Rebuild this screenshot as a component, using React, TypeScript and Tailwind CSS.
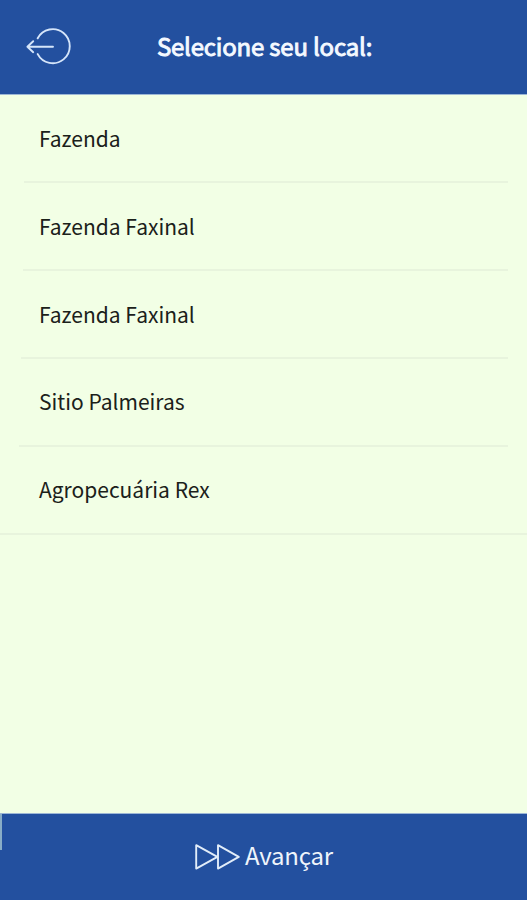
const places = [
  { name: "Fazenda", line: "ml-[24px] mr-[19px]" },
  { name: "Fazenda Faxinal", line: "ml-[23px] mr-[19px]" },
  { name: "Fazenda Faxinal", line: "ml-[21px] mr-[19px]" },
  { name: "Sitio Palmeiras", line: "ml-[19px] mr-[19px]" },
  { name: "Agropecuária Rex", line: "" },
];

function ExitIcon() {
  return (
    <svg width="46" height="38" viewBox="0 0 46 38" fill="none" stroke="#d5e5fa" strokeWidth="1.9" strokeLinecap="round" strokeLinejoin="round">
      <path d="M12.7 10.3A17 17 0 1 1 12.7 26.1" />
      <path d="M28 18.7H2.4M8.2 13.2L2.4 18.7L8.2 24.2" />
    </svg>
  );
}

function ForwardIcon() {
  return (
    <svg width="46" height="28" viewBox="0 0 46 28" fill="none" stroke="#e2edf9" strokeWidth="1.9" strokeLinejoin="round">
      <path d="M2.2 2.2V25.6L23.4 13.9ZM24 2.2V25.6L44.8 13.9Z" />
    </svg>
  );
}

export default function App() {
  return (
    <div className="flex h-[900px] w-[527px] flex-col overflow-hidden bg-[#f2ffe5] font-['Noto_Sans_CJK_SC','Noto_Sans',sans-serif]">
      <header className="grid h-[95px] shrink-0 grid-cols-[1fr_auto_1fr] items-center border-b border-[#9db7d5] bg-[#23509f] pl-[25px] pr-[23px]">
        <ExitIcon />
        <h1 className="pb-[2px] text-[24px] leading-[34px] tracking-[-0.2px] text-[#f4f9ff] [-webkit-text-stroke:0.9px_#f4f9ff]">Selecione seu local:</h1>
      </header>
      <main className="flex-1">
        <ul>
          {places.map((place, i) => (
            <li key={i} className="flex h-[88px] flex-col">
              <span className={"flex flex-1 items-center pl-[39px] text-[21px] leading-[32px] text-[#1b211a] " + (i > 2 ? "pb-[2px]" : "")}>{place.name}</span>
              <div className={"h-[2px] shrink-0 bg-[#e8f4dd] " + place.line} />
            </li>
          ))}
        </ul>
      </main>
      <footer className="flex h-[87px] shrink-0 border-t border-[#9db7d5] bg-[#23509f]">
        <div className="h-[36px] w-[2px] bg-[#89adc6]" />
        <button className="flex flex-1 items-center justify-center gap-[5px] pr-[2px] text-[24px] leading-[34px] tracking-[-0.2px] text-[#eff5fb]">
          <ForwardIcon />
          <span className="pb-[5px]">Avançar</span>
        </button>
      </footer>
    </div>
  );
}
